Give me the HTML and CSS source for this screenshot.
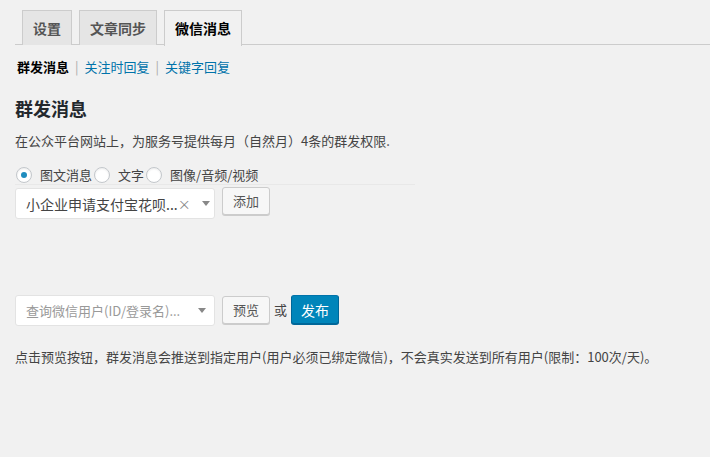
FILE: index.html
```html
<!DOCTYPE html>
<html lang="zh-CN">
<head>
<meta charset="utf-8">
<title>微信消息</title>
<link rel="stylesheet" href="styles.css">
</head>
<body>
<div class="wrap">
  <nav class="tabs">
    <a class="tab">设置</a>
    <a class="tab">文章同步</a>
    <a class="tab active">微信消息</a>
  </nav>
  <ul class="subnav">
    <li class="current">群发消息</li>
    <li class="sep">|</li>
    <li><a>关注时回复</a></li>
    <li class="sep">|</li>
    <li><a>关键字回复</a></li>
  </ul>
  <h2 class="title">群发消息</h2>
  <p class="desc">在公众平台网站上，为服务号提供每月（自然月）4条的群发权限.</p>
  <div class="types">
    <label class="radio"><span class="dot checked"></span>图文消息</label>
    <label class="radio"><span class="dot"></span>文字</label>
    <label class="radio"><span class="dot"></span>图像/音频/视频</label>
  </div>
  <div class="row">
    <div class="select">
      <span class="value">小企业申请支付宝花呗...</span>
      <span class="clear">×</span>
      <span class="arrow"></span>
    </div>
    <button class="btn">添加</button>
  </div>
  <div class="row send">
    <div class="select">
      <span class="value placeholder">查询微信用户(ID/登录名)...</span>
      <span class="arrow"></span>
    </div>
    <button class="btn">预览</button>
    <span class="or">或</span>
    <button class="btn primary">发布</button>
  </div>
  <p class="note">点击预览按钮，群发消息会推送到指定用户(用户必须已绑定微信)，不会真实发送到所有用户(限制：100次/天)。</p>
</div>
</body>
</html>
```

FILE: styles.css
```css
html, body {
  margin: 0;
  padding: 0;
  background: #f1f1f1;
}
body {
  font-family: "Noto Sans CJK SC", "Noto Sans", sans-serif;
  font-size: 13px;
  color: #444;
  width: 710px;
  height: 457px;
  overflow: hidden;
}
.wrap {
  padding: 10px 0 0 15px;
}
.tabs {
  display: flex;
  border-bottom: 1px solid #ccc;
  padding-left: 7px;
  height: 35px;
  box-sizing: border-box;
}
.tab {
  display: block;
  box-sizing: border-box;
  height: 35px;
  padding: 0 10px;
  margin-right: 7px;
  border: 1px solid #ccc;
  border-bottom: none;
  background: #e5e5e5;
  color: #555;
  font-size: 14px;
  font-weight: 600;
  line-height: 34px;
}
.tab.active {
  background: #f1f1f1;
  color: #000;
  height: 36px;
  position: relative;
  z-index: 1;
}
.subnav {
  list-style: none;
  margin: 12px 0 0 2px;
  padding: 0;
  display: flex;
  gap: 6px;
  line-height: 20px;
}
.subnav .current {
  color: #000;
  font-weight: 600;
}
.subnav .sep {
  color: #aaa;
}
.subnav a {
  color: #0073aa;
}
.title {
  margin: 18px 0 0 0;
  font-size: 18px;
  font-weight: 600;
  color: #23282d;
  line-height: 26px;
}
.desc {
  margin: 10px 0 0 0;
  line-height: 20px;
}
.types {
  display: flex;
  margin-top: 16px;
  width: 400px;
  border-bottom: 1px solid #e8e8e8;
  height: 17px;
  line-height: 16px;
}
.radio {
  display: flex;
  align-items: flex-start;
  gap: 8px;
  margin-right: 1px;
}
.radio .dot {
  box-sizing: border-box;
  width: 16px;
  height: 16px;
  border: 1px solid #c3c7cb;
  border-radius: 50%;
  background: #fff;
  box-shadow: inset 0 1px 2px rgba(0,0,0,0.08);
  margin-left: 1px;
  position: relative;
}
.radio .dot.checked::after {
  content: "";
  position: absolute;
  left: 4px;
  top: 4px;
  width: 6px;
  height: 6px;
  border-radius: 50%;
  background: #1e8cbe;
}
.row {
  display: flex;
  align-items: flex-start;
  margin-top: 2px;
}
.select {
  box-sizing: border-box;
  width: 200px;
  height: 31px;
  background: #fff;
  border: 1px solid #e3e3e3;
  border-radius: 3px;
  display: flex;
  align-items: center;
  padding: 0 8px 0 10px;
  margin-top: 1px;
}
.select .value {
  flex: 0 0 auto;
  font-size: 14px;
  color: #444;
  white-space: nowrap;
}
.select .value.placeholder {
  color: #999;
  font-size: 13px;
}
.select .clear {
  color: #888;
  font-size: 13px;
  margin-left: auto;
  margin-right: 11px;
}
.select .arrow {
  margin-left: auto;
  width: 0;
  height: 0;
  border-left: 4px solid transparent;
  border-right: 4px solid transparent;
  border-top: 5px solid #888;
}
.select .clear + .arrow {
  margin-left: 0;
}
.btn {
  box-sizing: border-box;
  font-family: inherit;
  font-size: 13px;
  height: 28px;
  line-height: 26px;
  padding: 0 10px;
  margin-left: 7px;
  border: 1px solid #ccc;
  border-radius: 3px;
  background: #f7f7f7;
  color: #555;
  box-shadow: 0 1px 0 #ccc;
  cursor: pointer;
}
.btn.primary {
  background: #0085ba;
  border-color: #0073aa #006799 #006799;
  color: #fff;
  box-shadow: 0 1px 0 #006799;
  margin-left: 4px;
  height: 29px;
  padding: 0 9px;
  font-size: 14px;
}
.row.send {
  margin-top: 74px;
  align-items: center;
}
.row.send .select {
  margin-top: 2px;
}
.or {
  margin-left: 4px;
  color: #444;
  font-size: 13px;
}
.note {
  margin: 21px 0 0 0;
  line-height: 20px;
}
```
